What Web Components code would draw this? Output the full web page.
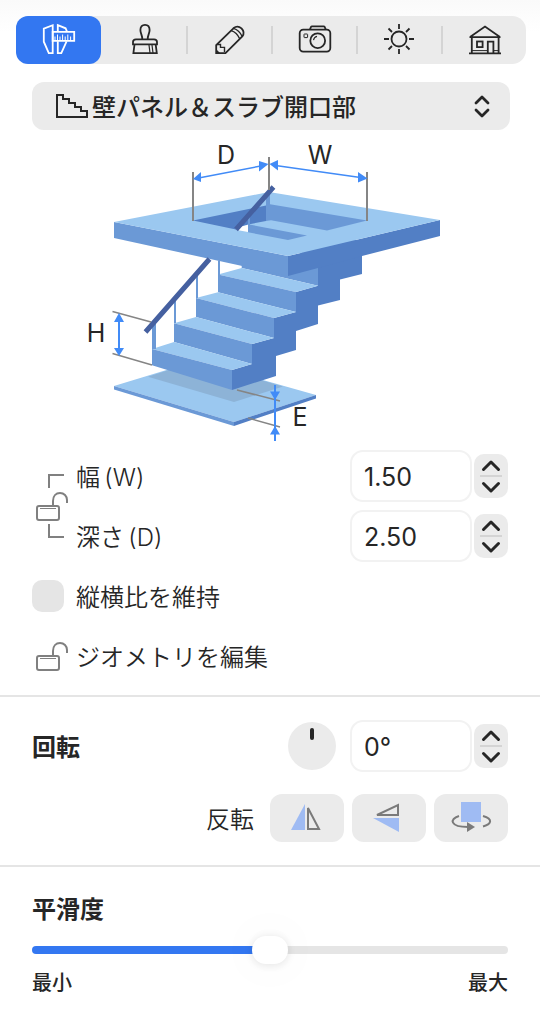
<!DOCTYPE html>
<html lang="ja">
<head>
<meta charset="UTF-8">
<meta name="viewport" content="width=device-width, initial-scale=1">
<title>壁パネル＆スラブ開口部</title>
<style>
    body {
        margin: 0;
        background: linear-gradient(#fafafa, #ffffff 32px) no-repeat;
        color: #262626;
        font-family: Inter, "Noto Sans CJK JP", sans-serif;
        font-size: 24px;
        line-height: 32px;
        --accent: #3377f1;
        --control: #ebebeb;
        --line: #e5e5e5;
        --label-weight: 350;
    }
</style>
</head>
<body>
<tool-tabs></tool-tabs>
<object-picker></object-picker>
<stair-diagram></stair-diagram>
<panel-section class="size">
    <linked-fields>
        <number-field label="幅&thinsp;(W)" value="1.50" step="0.1" digits="2"></number-field>
        <number-field label="深さ&thinsp;(D)" value="2.50" step="0.1" digits="2"></number-field>
    </linked-fields>
    <check-row>縦横比を維持</check-row>
    <lock-row>ジオメトリを編集</lock-row>
</panel-section>
<panel-section class="rotation">
    <number-field label="回転" value="0°" step="1" digits="0" unit="°" heading>
        <angle-dial></angle-dial>
    </number-field>
    <flip-buttons></flip-buttons>
</panel-section>
<panel-section class="smoothness">
    <smooth-slider></smooth-slider>
</panel-section>

<script>
const LOCK = `
    <rect x="5" y="16" width="22" height="14" rx="2"/>
    <path d="M21 15V11C21 6 24 3 28 3C32 3 35 6 35 10V13"/>
    <path d="M8 18.5H24" stroke-width="1"/>
`;

class ToolTabs extends HTMLElement {
    constructor() {
        super();
        this.attachShadow({ mode: "open" });
    }

    connectedCallback() {
        this.shadowRoot.innerHTML = `
        <style>
            :host {
                display: block;
                padding: 16px 14px 0 16px;
            }

            nav {
                display: grid;
                grid-template-columns: repeat(6, 1fr);
                height: 48px;
                border-radius: 14px;
                background: var(--control);
            }

            button {
                display: grid;
                place-items: center;
                border: 0;
                padding: 0 0 0 2px;
                background: linear-gradient(#d4d4d4, #d4d4d4) left center / 2px 28px no-repeat;
                color: #262626;
            }

            button:nth-child(-n+2) {
                padding: 0;
                background: none;
            }

            button[aria-pressed="true"] {
                border-radius: 12px;
                background: var(--accent);
                color: white;
            }

            svg {
                width: 33px;
                height: 32px;
                fill: none;
                stroke: currentColor;
                stroke-width: 1.8;
                overflow: visible;
            }
        </style>
        <nav>
            <button aria-label="寸法" aria-pressed="true">
                <svg viewBox="0 0 33 32">
                    <path d="M10.7 1.2V29.2H6.8L1.8 17.7V4.6Z"/>
                    <path d="M15.8 7.5V1.2L23.6 4.3L25 7.5M15.8 17.3V29.2H19.3L24.6 17.3"/>
                    <path d="M10.7 7.8H32.2V16.8H10.7Z"/>
                    <path d="M13 16V12.5M15.5 16V10.5M18 16V12.5M20.6 16V10.5M23.2 16V12.5M25.8 16V10.5M28.6 16V12.5" stroke-width="1"/>
                </svg>
            </button>
            <button aria-label="マテリアル">
                <svg viewBox="0 0 33 32">
                    <path d="M15.3 15.2C15.3 11 13.4 9.5 13.4 6C13.4 2.6 15.2 .8 18 .8C20.8 .8 22.6 2.6 22.6 6C22.6 9.5 20.7 11 20.7 15.2"/>
                    <path d="M9 15.3H27Q30 15.3 30 18V20.3H6V18Q6 15.3 9 15.3Z"/>
                    <path d="M7.5 20.5L6.4 29.2H29.8L28.7 20.5"/>
                    <path d="M22 21L23 29M25 21L26 29" stroke-width="1.2"/>
                </svg>
            </button>
            <button aria-label="編集">
                <svg viewBox="0 0 33 32">
                    <path d="M3.2 29.2V21.2L20.4 4.3Q24.5 .8 28.5 4.4Q32.3 8.4 29.3 12.4L12.5 29.2Z"/>
                    <path d="M18.2 6.6Q23.8 8.2 26.7 14.8M20.5 4.4Q26.2 6 29 12.3" stroke-width="1.4"/>
                    <path d="M4 20.5H7.5V23.4H11.5V28" stroke-width="1.4"/>
                    <path d="M3 25L7.5 29.5H3Z" fill="currentColor" stroke="none"/>
                </svg>
            </button>
            <button aria-label="カメラ">
                <svg viewBox="0 0 33 32">
                    <rect x="1.7" y="5.6" width="30.6" height="22" rx="3.5"/>
                    <path d="M12 5.4L13 2.9Q13.3 2.4 14 2.4H25.6Q26.4 2.4 26.7 3L27.7 5.4"/>
                    <circle cx="19.7" cy="16.7" r="7.4"/>
                    <path d="M15.5 16.2Q16 13 19 12.4" stroke-width="1.1"/>
                    <rect x="6" y="10" width="3.6" height="3.6" rx=".5" stroke-width="1"/>
                </svg>
            </button>
            <button aria-label="照明">
                <svg viewBox="0 0 33 32">
                    <circle cx="16" cy="15" r="7.5"/>
                    <path d="M16 0V5M16 25V30M1 15H6M26 15H31M5.5 4.5L9 8M23 22L26.5 25.5M26.5 4.5L23 8M9 22L5.5 25.5"/>
                </svg>
            </button>
            <button aria-label="建物">
                <svg viewBox="0 0 33 32">
                    <path d="M1.5 13.2H32.5M2.4 12.8L17 2.6L31.6 12.8M3.8 13.2V29M30.6 13.2V29M1 29.3H33"/>
                    <path d="M4 26.6H19.5M25.5 26.6H30" stroke-width="1"/>
                    <rect x="9" y="17.5" width="5.6" height="5.6"/>
                    <path d="M19.8 29V17.6H25.4V29"/>
                </svg>
            </button>
        </nav>
        `;

        this.shadowRoot.querySelectorAll("button").forEach((button) => {
            button.addEventListener("click", () => {
                this.shadowRoot.querySelector("[aria-pressed]").removeAttribute("aria-pressed");
                button.setAttribute("aria-pressed", "true");
            });
        });
    }
}

class ObjectPicker extends HTMLElement {
    constructor() {
        super();
        this.attachShadow({ mode: "open" });
    }

    connectedCallback() {
        this.shadowRoot.innerHTML = `
        <style>
            :host {
                display: grid;
                grid-template-columns: 24px 32px 1fr 16px 20px;
                align-items: center;
                margin: 18px 30px 0 32px;
            }

            select {
                grid-area: 1 / 1 / 2 / -1;
                appearance: none;
                box-sizing: border-box;
                width: 100%;
                height: 48px;
                margin: 0;
                padding: 2px 40px 0 60px;
                border: 0;
                border-radius: 12px;
                background: var(--control);
                color: inherit;
                font-family: inherit;
                font-size: 24px;
                font-weight: 500;
            }

            svg {
                grid-row: 1;
                fill: none;
                stroke: #262626;
                pointer-events: none;
            }

            .stairs {
                grid-column: 2;
                width: 32px;
                height: 24px;
                stroke-width: 2;
            }

            .arrows {
                grid-column: 4;
                width: 16px;
                height: 24px;
                stroke-width: 2.8;
                stroke-linecap: round;
                stroke-linejoin: round;
            }
        </style>
        <select aria-label="オブジェクト">
            <option>壁パネル＆スラブ開口部</option>
        </select>
        <svg class="stairs" viewBox="0 0 32 24">
            <path d="M1 1H7V5H13V9H19V13H25V17H31V23H1Z"/>
        </svg>
        <svg class="arrows" viewBox="0 0 16 24">
            <path d="M2 9L8 3L14 9M2 16L8 22L14 16"/>
        </svg>
        `;
    }
}

class StairDiagram extends HTMLElement {
    constructor() {
        super();
        this.attachShadow({ mode: "open" });
    }

    connectedCallback() {
        this.shadowRoot.innerHTML = `
        <style>
            :host {
                display: flex;
                justify-content: center;
            }

            svg {
                width: 380px;
                height: 316px;
            }

            .light { fill: #9bc8f0; }
            .mid { fill: #6b99d6; }
            .dark { fill: #527fc5; }
            .shade { fill: #8db3d7; }
            .gap { fill: #ffffff; }
            .post { stroke: #6b99d6; stroke-width: 2; }
            .post.near { stroke-width: 4; }
            .rail { stroke: #4560a0; stroke-width: 5; }
            .guide { stroke: #858585; stroke-width: 2; }
            .guide.thin { stroke-width: 1.5; }
            .arrow { stroke: #418bf7; stroke-width: 1.5; }
            .arrow.thick { stroke-width: 2; }
            .head { fill: #418bf7; }

            text {
                font-size: 25px;
                fill: #262626;
                text-anchor: middle;
            }
        </style>
        <svg viewBox="80 130 380 316">
            <!-- floor plate -->
            <path class="light" d="M114 386L196 361L316 395L234 422Z"/>
            <path class="mid" d="M114 386L234 422V426L114 389.5Z"/>
            <path class="dark" d="M234 422L316 395V398.5L234 426Z"/>
            <path class="shade" d="M148 376.7L196 361L283 386.5L234 402Z"/>

            <!-- side of the flight -->
            <path class="dark" d="M232 370V390L276 376V356L296 350V331L318 324V305.5L340 300V279.5L362 274V240H288L318 268V285.7L296 292V312L274 318V338L252 344V364Z"/>

            <!-- treads and risers, top to bottom -->
            <path class="mid" d="M241.7 260V268L318 285.7V260Z"/>
            <path class="light" d="M218 274.5L241.7 268L318 285.7L296 292Z"/>
            <path class="mid" d="M218 274.5L296 292V312L218 292.3Z"/>
            <path class="light" d="M196 298L218 292.3L296 312L274 318Z"/>
            <path class="mid" d="M196 298L274 318V338L196 317Z"/>
            <path class="light" d="M174 323.3L196 317L274 338L252 344Z"/>
            <path class="mid" d="M174 323.3L252 344V364L174 342Z"/>
            <path class="light" d="M152 349L174 342L252 364L232 370Z"/>
            <path class="mid" d="M152 349L232 370V390L152 365.3Z"/>

            <!-- slab -->
            <path class="dark" d="M288 256L440 220V236L362 256L318 268L288 276Z"/>
            <path class="mid" d="M114 222L288 256V276L114 238Z"/>
            <path class="light" d="M114 222L269 192L440 220L288 256Z"/>

            <!-- opening -->
            <path class="dark" d="M193 220.5L266 205.5V221L248 224.5L236 229.5Z"/>
            <path class="gap" d="M235 228L248 224.7V232L237 230Z"/>
            <path class="mid" d="M266 193H270V204.3L367 220.5L327 230.6L271 220.3L266 221Z"/>
            <path class="mid" d="M248 224.3L307 235.4L288 240L248 232.3Z"/>
            <path class="post" d="M249 214V225"/>

            <!-- handrail -->
            <path class="post near" d="M154 324V349"/>
            <path class="post" d="M175 299V323M197 274V298M219 260.5V275"/>
            <path class="rail" d="M145.5 332L209.5 259M236 229.5L273.5 187"/>

            <!-- dimensions -->
            <path class="guide" d="M193 172V221M269 157V190M367 172V221"/>
            <path class="guide thin" d="M112.5 311.5L151 322M112.5 353.5L152 365M237 390L280 401M248 418L280 427"/>
            <path class="arrow" d="M196 178.5L266 165M272 165L364 178"/>
            <path class="arrow thick" d="M119 316V353M275 385V441"/>
            <path class="head" d="M193 179L201 172V182ZM268.5 164L259 161V171.5ZM269.5 164L278 160V170.5ZM367.5 178.5L358 172V182.5Z"/>
            <path class="head" d="M119 313L124 322H114ZM119 356L114 348H124ZM275 400L270 391.5H280ZM275 426L280 434.5H270Z"/>
            <text x="226" y="164">D</text>
            <text x="320" y="164">W</text>
            <text x="96" y="342">H</text>
            <text x="300" y="426">E</text>
        </svg>
        `;
    }
}

class PanelSection extends HTMLElement {
    constructor() {
        super();
        this.attachShadow({ mode: "open" });
    }

    connectedCallback() {
        this.shadowRoot.innerHTML = `
        <style>
            :host {
                display: flex;
                flex-direction: column;
                padding: 0 32px 9px;
            }

            :host(.rotation) {
                gap: 22px;
                padding: 23px 32px;
                border-top: 2px solid var(--line);
            }

            :host(.smoothness) {
                padding: 27px 32px 26px;
                border-top: 2px solid var(--line);
            }
        </style>
        <slot></slot>
        `;
    }
}

class LinkedFields extends HTMLElement {
    constructor() {
        super();
        this.attachShadow({ mode: "open" });
    }

    connectedCallback() {
        this.shadowRoot.innerHTML = `
        <style>
            :host {
                display: grid;
                grid-template-columns: 36px 1fr;
                align-items: center;
                column-gap: 8px;
            }

            .rows {
                display: grid;
                gap: 8px;
                padding: 4px 0;
            }

            button {
                display: block;
                padding: 0;
                border: 0;
                background: none;
            }

            svg {
                display: block;
                width: 36px;
                height: 72px;
                fill: none;
                stroke: #808080;
                stroke-width: 2;
            }
        </style>
        <button aria-label="幅と深さをロック">
            <svg viewBox="0 0 36 72">
                <path d="M17 18V5H32M17 54V67H32"/>
                <g transform="translate(0 20)">${LOCK}</g>
            </svg>
        </button>
        <div class="rows"><slot></slot></div>
        `;
    }
}

class NumberField extends HTMLElement {
    constructor() {
        super();
        this.attachShadow({ mode: "open" });
    }

    connectedCallback() {
        this.shadowRoot.innerHTML = `
        <style>
            :host {
                display: flex;
                align-items: center;
                height: 52px;
            }

            label {
                flex: 1;
                padding-top: 4px;
                font-weight: var(--label-weight);
            }

            :host([heading]) label {
                font-weight: 700;
            }

            input {
                box-sizing: border-box;
                width: 122px;
                height: 52px;
                margin: 0 2px 0 14px;
                padding: 2px 12px 0;
                border: 2px solid #f2f2f2;
                border-radius: 13px;
                background: white;
                color: inherit;
                font-family: inherit;
                font-size: 25px;
            }

            .stepper {
                display: grid;
                width: 34px;
                height: 44px;
                border-radius: 10px;
                background: linear-gradient(#d4d4d4, #d4d4d4) center / 22px 2px no-repeat var(--control);
            }

            button {
                padding: 0;
                border: 0;
                background: none;
            }

            svg {
                display: block;
                width: 34px;
                height: 22px;
                fill: none;
                stroke: #262626;
                stroke-width: 3;
                stroke-linecap: round;
                stroke-linejoin: round;
            }
        </style>
        <label for="value">${this.getAttribute("label")}</label>
        <slot></slot>
        <input id="value" type="text" inputmode="decimal" value="${this.getAttribute("value")}">
        <div class="stepper">
            <button class="up" aria-label="増やす"><svg viewBox="0 0 34 22"><path d="M9.5 15.5L17 8L24.5 15.5"/></svg></button>
            <button class="down" aria-label="減らす"><svg viewBox="0 0 34 22"><path d="M9.5 7.5L17 15L24.5 7.5"/></svg></button>
        </div>
        `;

        this.shadowRoot.querySelector(".up").addEventListener("click", () => this.change(1));
        this.shadowRoot.querySelector(".down").addEventListener("click", () => this.change(-1));
    }

    change(direction) {
        const input = this.shadowRoot.querySelector("input");
        const next = parseFloat(input.value) + direction * Number(this.getAttribute("step"));
        input.value = next.toFixed(Number(this.getAttribute("digits"))) + (this.getAttribute("unit") || "");
    }
}

class CheckRow extends HTMLElement {
    constructor() {
        super();
        this.attachShadow({ mode: "open" });
    }

    connectedCallback() {
        this.shadowRoot.innerHTML = `
        <style>
            :host {
                display: block;
            }

            label {
                display: flex;
                align-items: center;
                gap: 12px;
                height: 60px;
            }

            span {
                padding-top: 4px;
                font-weight: var(--label-weight);
            }

            input {
                appearance: none;
                width: 32px;
                height: 32px;
                margin: 0;
                border-radius: 10px;
                background: var(--line);
            }

            input:checked {
                background: var(--accent);
            }
        </style>
        <label><input type="checkbox"><span><slot></slot></span></label>
        `;
    }
}

class LockRow extends HTMLElement {
    constructor() {
        super();
        this.attachShadow({ mode: "open" });
    }

    connectedCallback() {
        this.shadowRoot.innerHTML = `
        <style>
            :host {
                display: flex;
                height: 60px;
            }

            button {
                display: flex;
                align-items: center;
                gap: 8px;
                padding: 0;
                border: 0;
                background: none;
                color: inherit;
                font: inherit;
            }

            span {
                padding-top: 4px;
                font-weight: var(--label-weight);
            }

            svg {
                width: 36px;
                height: 32px;
                fill: none;
                stroke: #808080;
                stroke-width: 2;
            }
        </style>
        <button><svg viewBox="0 0 36 32">${LOCK}</svg><span><slot></slot></span></button>
        `;
    }
}

class AngleDial extends HTMLElement {
    constructor() {
        super();
        this.attachShadow({ mode: "open" });
    }

    connectedCallback() {
        this.shadowRoot.innerHTML = `
        <style>
            :host {
                display: block;
            }

            button {
                display: flex;
                justify-content: center;
                align-items: flex-start;
                width: 48px;
                height: 48px;
                padding: 6px 0 0;
                border: 0;
                border-radius: 50%;
                background: var(--control);
            }

            span {
                width: 4px;
                height: 12px;
                border-radius: 2px;
                background: #262626;
            }
        </style>
        <button aria-label="角度"><span></span></button>
        `;
    }
}

class FlipButtons extends HTMLElement {
    constructor() {
        super();
        this.attachShadow({ mode: "open" });
    }

    connectedCallback() {
        this.shadowRoot.innerHTML = `
        <style>
            :host {
                display: flex;
                align-items: center;
                justify-content: flex-end;
                gap: 8px;
            }

            span {
                margin-right: 8px;
                padding-top: 4px;
                font-weight: var(--label-weight);
            }

            button {
                display: grid;
                place-items: center;
                width: 74px;
                height: 48px;
                padding: 0;
                border: 0;
                border-radius: 12px;
                background: var(--control);
            }

            svg {
                width: 40px;
                height: 32px;
                fill: none;
                stroke: #7a7a7a;
                stroke-width: 2;
                overflow: visible;
            }

            .fill {
                fill: #9fbbf3;
                stroke: none;
            }
        </style>
        <span>反転</span>
        <button aria-label="左右反転">
            <svg viewBox="0 0 40 32">
                <path class="fill" d="M4 28L18 2V28Z"/>
                <path d="M21 6V27H32Z"/>
            </svg>
        </button>
        <button aria-label="上下反転">
            <svg viewBox="0 0 40 32">
                <path d="M8 13L29 3V13Z"/>
                <path class="fill" d="M4 16H30V30Z"/>
            </svg>
        </button>
        <button aria-label="前後反転">
            <svg viewBox="0 0 40 32">
                <rect class="fill" x="10" width="20" height="20"/>
                <path d="M8 14C-2 17 -1 25 17 25M32 14C42 17 41 22 32 24.5"/>
                <path d="M16 20L24 25L16 30Z" fill="#7a7a7a" stroke="none"/>
            </svg>
        </button>
        `;
    }
}

class SmoothSlider extends HTMLElement {
    constructor() {
        super();
        this.attachShadow({ mode: "open" });
    }

    connectedCallback() {
        this.shadowRoot.innerHTML = `
        <style>
            :host {
                display: block;
            }

            label {
                display: block;
                font-weight: 700;
            }

            input {
                --fill: 50%;
                appearance: none;
                display: block;
                width: 100%;
                height: 28px;
                margin: 10px 0 5px;
                background: none;
            }

            input::-webkit-slider-runnable-track {
                height: 8px;
                border-radius: 4px;
                background: linear-gradient(to right, var(--accent) var(--fill), var(--line) var(--fill));
            }

            input::-webkit-slider-thumb {
                appearance: none;
                width: 36px;
                height: 28px;
                margin-top: -10px;
                border-radius: 14px;
                background: white;
                box-shadow: 0 1px 8px rgba(0, 0, 0, 0.1), 0 0 48px rgba(0, 0, 0, 0.05);
            }

            .ends {
                display: flex;
                justify-content: space-between;
                font-size: 20px;
                font-weight: 500;
                line-height: 28px;
            }
        </style>
        <label for="range">平滑度</label>
        <input id="range" type="range" min="0" max="100" value="50">
        <div class="ends"><span>最小</span><span>最大</span></div>
        `;

        const input = this.shadowRoot.querySelector("input");
        input.addEventListener("input", () => input.style.setProperty("--fill", input.value + "%"));
    }
}

customElements.define("tool-tabs", ToolTabs);
customElements.define("object-picker", ObjectPicker);
customElements.define("stair-diagram", StairDiagram);
customElements.define("panel-section", PanelSection);
customElements.define("linked-fields", LinkedFields);
customElements.define("number-field", NumberField);
customElements.define("check-row", CheckRow);
customElements.define("lock-row", LockRow);
customElements.define("angle-dial", AngleDial);
customElements.define("flip-buttons", FlipButtons);
customElements.define("smooth-slider", SmoothSlider);
</script>
</body>
</html>
